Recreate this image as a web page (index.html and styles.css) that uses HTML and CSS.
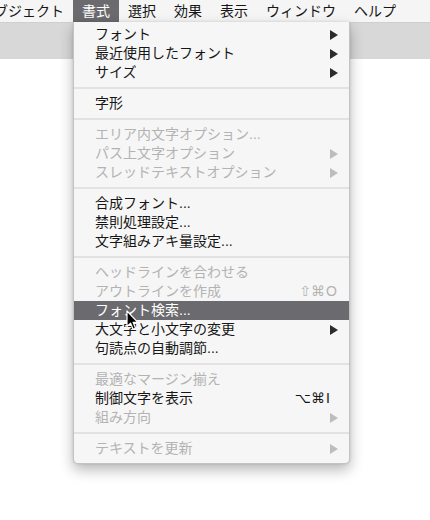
FILE: index.html
```html
<!DOCTYPE html>
<html lang="ja">
<head>
<meta charset="utf-8">
<link rel="stylesheet" href="styles.css">
</head>
<body>
<div class="screen">
  <div class="menubar">
    <span class="mb-item">オブジェクト</span>
    <span class="mb-item active">書式</span>
    <span class="mb-item">選択</span>
    <span class="mb-item">効果</span>
    <span class="mb-item">表示</span>
    <span class="mb-item">ウィンドウ</span>
    <span class="mb-item">ヘルプ</span>
  </div>
  <div class="toolbar"></div>

  <div class="menu">
    <div class="group">
      <div class="item"><span class="label">フォント</span><svg class="arrow" viewBox="0 0 8 10"><path d="M0 0L8 5L0 10Z"/></svg></div>
      <div class="item"><span class="label">最近使用したフォント</span><svg class="arrow" viewBox="0 0 8 10"><path d="M0 0L8 5L0 10Z"/></svg></div>
      <div class="item"><span class="label">サイズ</span><svg class="arrow" viewBox="0 0 8 10"><path d="M0 0L8 5L0 10Z"/></svg></div>
    </div>
    <div class="sep"></div>
    <div class="group">
      <div class="item"><span class="label">字形</span></div>
    </div>
    <div class="sep"></div>
    <div class="group">
      <div class="item disabled"><span class="label">エリア内文字オプション...</span></div>
      <div class="item disabled"><span class="label">パス上文字オプション</span><svg class="arrow" viewBox="0 0 8 10"><path d="M0 0L8 5L0 10Z"/></svg></div>
      <div class="item disabled"><span class="label">スレッドテキストオプション</span><svg class="arrow" viewBox="0 0 8 10"><path d="M0 0L8 5L0 10Z"/></svg></div>
    </div>
    <div class="sep"></div>
    <div class="group">
      <div class="item"><span class="label">合成フォント...</span></div>
      <div class="item"><span class="label">禁則処理設定...</span></div>
      <div class="item"><span class="label">文字組みアキ量設定...</span></div>
    </div>
    <div class="sep"></div>
    <div class="group">
      <div class="item disabled"><span class="label">ヘッドラインを合わせる</span></div>
      <div class="item disabled"><span class="label">アウトラインを作成</span><span class="shortcut"><span class="mods">⇧⌘</span><span class="key">O</span></span></div>
      <div class="item selected"><span class="label">フォント検索...</span></div>
      <div class="item"><span class="label">大文字と小文字の変更</span><svg class="arrow" viewBox="0 0 8 10"><path d="M0 0L8 5L0 10Z"/></svg></div>
      <div class="item"><span class="label">句読点の自動調節...</span></div>
    </div>
    <div class="sep"></div>
    <div class="group">
      <div class="item disabled"><span class="label">最適なマージン揃え</span></div>
      <div class="item"><span class="label">制御文字を表示</span><span class="shortcut"><span class="mods">⌥⌘</span><span class="key">I</span></span></div>
      <div class="item disabled"><span class="label">組み方向</span><svg class="arrow" viewBox="0 0 8 10"><path d="M0 0L8 5L0 10Z"/></svg></div>
    </div>
    <div class="sep"></div>
    <div class="group">
      <div class="item disabled"><span class="label">テキストを更新</span><svg class="arrow" viewBox="0 0 8 10"><path d="M0 0L8 5L0 10Z"/></svg></div>
    </div>
  </div>

  <svg class="cursor" width="14" height="22" viewBox="0 0 14 22">
    <path d="M1 1 L1 16.5 L4.6 13.2 L7.2 19.2 L9.6 18.2 L7.1 12.3 L11.8 12.3 Z" fill="#000" stroke="#fff" stroke-width="1.2" stroke-linejoin="round"/>
  </svg>
</div>
</body>
</html>
```

FILE: styles.css
```css
* { box-sizing: border-box; }
html, body {
  margin: 0;
  padding: 0;
  background: #ffffff;
}
body {
  font-family: "Liberation Sans", "Noto Sans CJK JP", sans-serif;
  color: #161616;
  width: 430px;
  height: 520px;
  overflow: hidden;
}
.screen {
  position: relative;
  width: 430px;
  height: 520px;
}
.menubar {
  height: 22px;
  display: flex;
  align-items: stretch;
  margin-left: -29px;
  background: #f5f5f5;
  font-size: 14px;
  line-height: 22px;
  white-space: nowrap;
}
.mb-item {
  padding: 0 9px;
  color: #161616;
}
.mb-item.active {
  background: #6b6a6e;
  color: #ffffff;
}
.toolbar {
  height: 37px;
  background: #d8d8d8;
  border-top: 1px solid #cfcfcf;
}
.menu {
  position: absolute;
  left: 73px;
  top: 22px;
  width: 277px;
  padding: 3px 0 5px;
  background: #f6f6f6;
  border: 1px solid #c3c3c3;
  border-top: none;
  border-radius: 0 0 5px 5px;
  box-shadow: 0 6px 14px rgba(0, 0, 0, 0.28), 0 0 3px rgba(0, 0, 0, 0.12);
  font-size: 14px;
}
.group {
  display: flex;
  flex-direction: column;
}
.item {
  height: 19px;
  line-height: 19px;
  display: flex;
  align-items: center;
  padding: 0 11px 0 21px;
  color: #161616;
  white-space: nowrap;
}
.item .label {
  flex: 1;
}
.item.disabled {
  color: #b3b3b3;
}
.item.selected {
  background: #6b6a6e;
  color: #ffffff;
}
.arrow {
  width: 8px;
  height: 10px;
  fill: #2b2b2b;
  flex: none;
}
.item.disabled .arrow {
  fill: #bdbdbd;
}
.shortcut {
  display: flex;
  align-items: baseline;
  font-family: "DejaVu Sans", "Liberation Sans", sans-serif;
  font-size: 14px;
}
.shortcut .mods {
  text-align: right;
}
.shortcut .key {
  width: 12px;
  margin-left: 1px;
  text-align: left;
  font-family: "Liberation Sans", sans-serif;
  font-size: 14px;
}
.sep {
  height: 2px;
  margin: 5px 0;
  background: #e2e2e2;
}
.cursor {
  position: absolute;
  left: 126px;
  top: 310px;
}
```
